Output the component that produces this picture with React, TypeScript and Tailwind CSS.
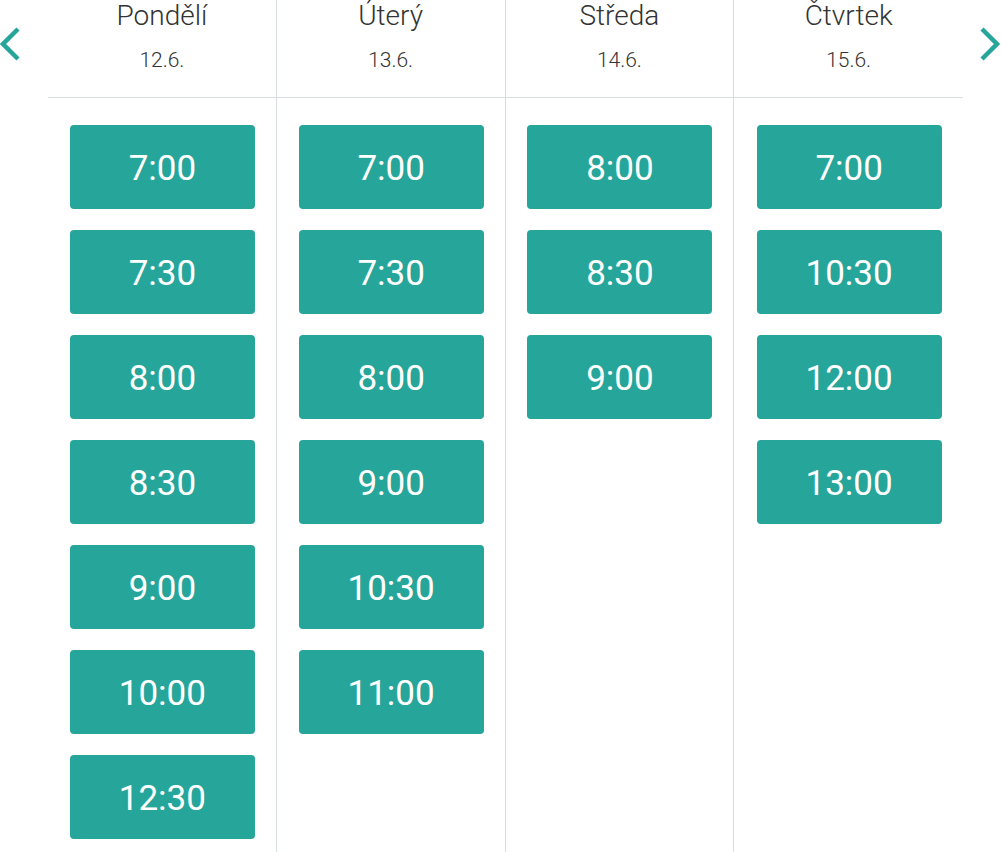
const days = [
  { name: "Pondělí", date: "12.6.", slots: ["7:00", "7:30", "8:00", "8:30", "9:00", "10:00", "12:30"] },
  { name: "Úterý", date: "13.6.", slots: ["7:00", "7:30", "8:00", "9:00", "10:30", "11:00"] },
  { name: "Středa", date: "14.6.", slots: ["8:00", "8:30", "9:00"] },
  { name: "Čtvrtek", date: "15.6.", slots: ["7:00", "10:30", "12:00", "13:00"] },
];

const Chevron = ({ dir }: { dir: "left" | "right" }) => (
  <svg width="22" height="36" viewBox="0 0 22 36" fill="none" className="text-[#26a69a]">
    <path
      d={dir === "left" ? "M18 3 L3 18 L18 33" : "M3 3 L18 18 L3 33"}
      stroke="currentColor"
      strokeWidth="4.5"
      strokeLinejoin="miter"
    />
  </svg>
);

const App = () => {
  return (
    <div className="h-[852px] w-[1001px] overflow-hidden bg-white font-['Roboto',sans-serif] flex">
      <div className="w-[48px] shrink-0 pt-[26px]">
        <button>
          <Chevron dir="left" />
        </button>
      </div>

      <div className="w-[915px] grid grid-cols-4 divide-x divide-[#d8dde0]">
        {days.map((day) => (
          <div key={day.name} className="flex flex-col h-[852px]">
            <div className="h-[98px] shrink-0 border-b border-[#d8dde0] flex flex-col items-center text-[#333]">
              <div className="text-[28px] leading-[32px] font-light">{day.name}</div>
              <div className="mt-[15px] text-[21px] leading-[26px] font-light">{day.date}</div>
            </div>
            <div className="flex flex-col items-center gap-[21px] pt-[27px] pl-[1px]">
              {day.slots.map((slot) => (
                <button
                  key={slot}
                  className="w-[185px] h-[84px] rounded-[4px] bg-[#26a69a] text-white text-[35px] font-normal flex items-center justify-center pt-[4px]"
                >
                  {slot}
                </button>
              ))}
            </div>
          </div>
        ))}
      </div>

      <div className="flex-1 pt-[26px] flex items-start justify-end">
        <button>
          <Chevron dir="right" />
        </button>
      </div>
    </div>
  );
};

export default App;
